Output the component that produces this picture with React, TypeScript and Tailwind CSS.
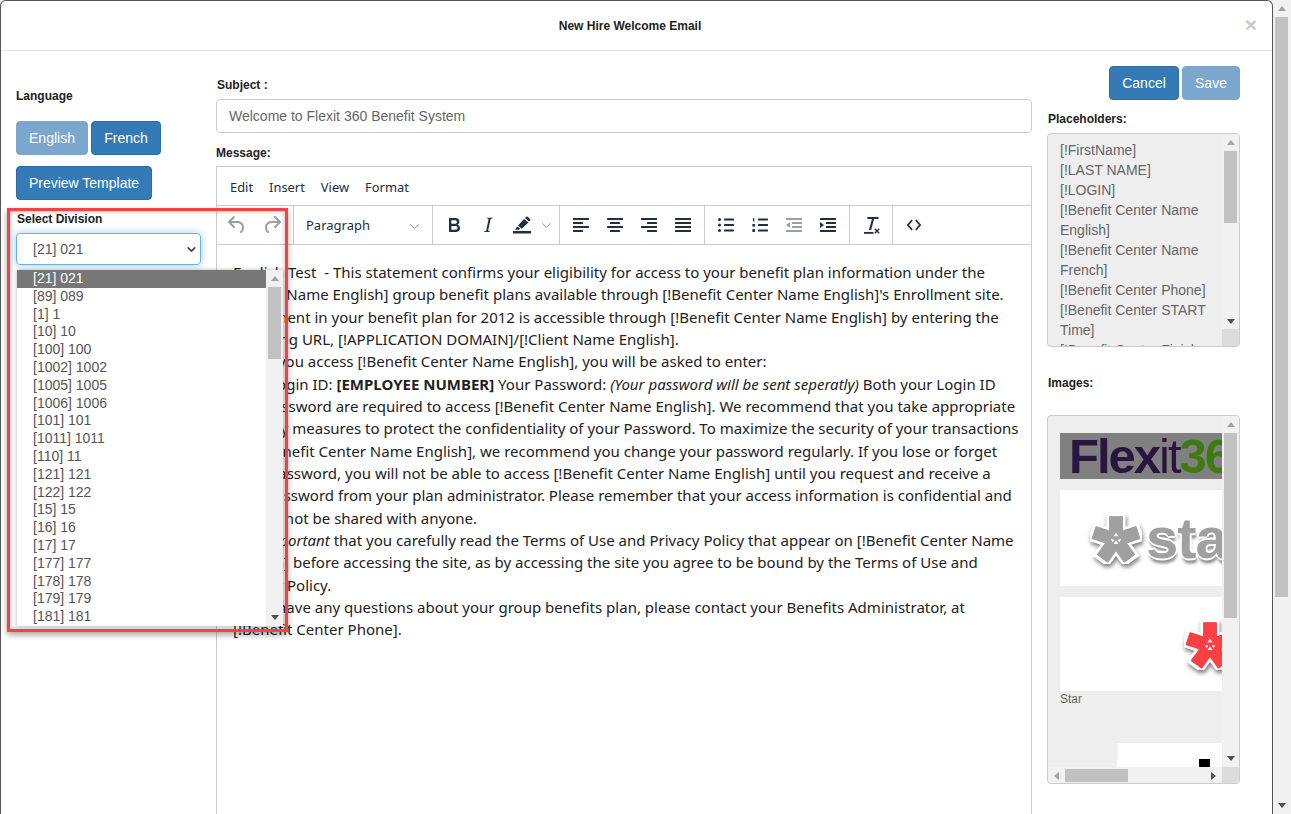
import { ChevronDown } from "lucide-react";

const divisions = [
  "[21] 021", "[89] 089", "[1] 1", "[10] 10", "[100] 100", "[1002] 1002", "[1005] 1005", "[1006] 1006",
  "[101] 101", "[1011] 1011", "[110] 11", "[121] 121", "[122] 122", "[15] 15", "[16] 16", "[17] 17",
  "[177] 177", "[178] 178", "[179] 179", "[181] 181",
];

const placeholders = [
  "[!FirstName]", "[!LAST NAME]", "[!LOGIN]", "[!Benefit Center Name English]", "[!Benefit Center Name French]",
  "[!Benefit Center Phone]", "[!Benefit Center START Time]", "[!Benefit Center Finish",
];

const font = "font-['Liberation_Sans',Arial,sans-serif]";

function Btn({ children, light, className = "" }: { children: React.ReactNode; light?: boolean; className?: string }) {
  return (
    <button className={`h-[34px] rounded-[4px] border text-[14px] text-white ${light ? "bg-[#7ba6ce] border-[#7ba6ce]" : "bg-[#337ab7] border-[#2e6da4]"} ${className}`}>
      {children}
    </button>
  );
}

function Arrows() {
  return <span className="w-0 h-0 border-x-[4px] border-x-transparent border-t-[5px] border-t-[#505050]" />;
}

function Scrollbar({ height, thumbTop, thumbHeight }: { height: number; thumbTop: number; thumbHeight: number }) {
  return (
    <div className="w-[17px] shrink-0 bg-[#f1f1f1] flex flex-col items-center justify-between py-[6px] relative" style={{ height }}>
      <span className="w-0 h-0 border-x-[4px] border-x-transparent border-b-[5px] border-b-[#a3a3a3]" />
      <div className="absolute left-[2px] w-[13px] bg-[#c1c1c1]" style={{ top: thumbTop, height: thumbHeight }} />
      <Arrows />
    </div>
  );
}

function Tool({ children, muted }: { children: React.ReactNode; muted?: boolean }) {
  return (
    <span className={`w-[34px] flex justify-center items-center ${muted ? "text-[#9a9ea5]" : "text-[#222f3e]"}`}>
      <svg width="24" height="24" viewBox="0 0 24 24" fill="currentColor">{children}</svg>
    </span>
  );
}

// bars used by the align and list icons: [x, y, width]
function Bars({ rows }: { rows: number[][] }) {
  return (
    <>
      {rows.map(([x, y, w]) => (
        <rect key={`${x}-${y}`} x={x} y={y} width={w} height="2" rx="0.6" />
      ))}
    </>
  );
}

function Star({ color, size }: { color: string; size: number }) {
  return (
    <svg width={size} height={size} viewBox="0 0 60 60" className="shrink-0 drop-shadow-[1px_3px_2px_rgba(0,0,0,0.5)]">
      {[0, 72, 144, 216, 288].map((a) => (
        <rect key={a} x="21" y="3" width="18" height="26" transform={`rotate(${a} 30 32)`} fill={color} stroke="#fff" strokeWidth="4" />
      ))}
      {[0, 72, 144, 216, 288].map((a) => (
        <rect key={a} x="22" y="5" width="16" height="28" transform={`rotate(${a} 30 32)`} fill={color} />
      ))}
      <path d="M30 24l3 4h-6zM24 31l4 1-2 3zM36 31l-4 1 2 3zM30 33l3 4h-6z" fill="#fff" />
    </svg>
  );
}

export default function App() {
  return (
    <div className={`${font} h-[814px] w-[1291px] overflow-hidden flex bg-[#f1f1f1] text-[#333]`}>
      <div className="w-[1273px] shrink-0 h-[814px] bg-white border border-[#555] border-b-0 rounded-t-[6px] relative overflow-hidden">
        <div className="h-[50px] border-b border-[#e5e5e5] flex items-center justify-center pr-[13px] text-[12px] font-bold text-[#222] relative">
          New Hire Welcome Email
          <span className="absolute right-[15px] top-[13px] text-[21px] font-bold leading-[21px] text-[#c9c9c9]">×</span>
        </div>

        <div className="flex">
          <div className="w-[215px] shrink-0 pl-[15px] pt-[38px]">
            <div className="text-[12px] font-bold leading-[14px] text-[#222]">Language</div>
            <div className="flex gap-[3px] mt-[18px]">
              <Btn light className="w-[72px]">English</Btn>
              <Btn className="w-[70px]">French</Btn>
            </div>
            <Btn className="w-[136px] mt-[11px]">Preview Template</Btn>
            <div className="text-[12px] font-bold leading-[14px] text-[#222] mt-[12px] ml-[1px]">Select Division</div>
            <div className="mt-[7px] w-[185px] h-[32px] rounded-[4px] border border-[#66afe9] shadow-[0_0_8px_rgba(102,175,233,0.6)] flex items-center justify-between pl-[16px] pr-[2px] text-[14px] text-[#555]">
              [21] 021
              <ChevronDown size={13} strokeWidth={3} className="text-[#444]" />
            </div>
          </div>

          <div className="w-[816px] shrink-0">
            <div className="text-[12px] font-bold leading-[14px] text-[#222] mt-[27px] ml-[1px]">Subject :</div>
            <div className="mt-[7px] h-[34px] rounded-[4px] border border-[#ccc] flex items-center px-[12px] text-[14px] text-[#666]">Welcome to Flexit 360 Benefit System</div>
            <div className="text-[12px] font-bold leading-[14px] text-[#222] mt-[13px]">Message:</div>
            <div className="mt-[6px] border border-[#ccc] h-[650px]">
              <div className="h-[39px] border-b border-[#ccc] flex items-center gap-[16px] pl-[13px] pt-[3px] text-[12.9px] text-[#222f3e] font-['Noto_Sans',sans-serif]">
                <span>Edit</span><span>Insert</span><span>View</span><span>Format</span>
              </div>
              <div className="h-[39px] border-b border-[#ccc] flex items-center">
                <div className="w-[77px] h-full border-r border-[#ccc] flex items-center pl-[3px]">
                  <Tool muted><path d="M6.4 8H12c3.7 0 6.2 2 6.8 5.1.6 2.7-.4 5.6-2.3 6.8a1 1 0 0 1-1-1.8c1.1-.6 1.8-2.7 1.4-4.6-.5-2.1-2.1-3.5-4.9-3.5H6.4l3.3 3.3a1 1 0 1 1-1.4 1.4l-5-5a1 1 0 0 1 0-1.4l5-5a1 1 0 0 1 1.4 1.4L6.4 8z" /></Tool>
                  <span className="w-[1px]" />
                  <Tool muted><path d="M17.6 10H12c-2.8 0-4.4 1.4-4.9 3.5-.4 2 .3 4 1.4 4.6a1 1 0 1 1-1 1.8c-2-1.2-2.9-4.1-2.3-6.8.6-3 3-5.1 6.8-5.1h5.6l-3.3-3.3a1 1 0 1 1 1.4-1.4l5 5a1 1 0 0 1 0 1.4l-5 5a1 1 0 0 1-1.4-1.4l3.3-3.3z" /></Tool>
                </div>
                <div className="w-[139px] h-full border-r border-[#ccc] flex items-center justify-between pl-[12px] pr-[10px] pt-[2px] text-[13px] text-[#222f3e] font-['Noto_Sans',sans-serif]">
                  Paragraph
                  <ChevronDown size={15} strokeWidth={1.6} className="text-[#8a8f97]" />
                </div>
                <div className="w-[127px] h-full border-r border-[#ccc] flex items-center pl-[4px]">
                  <Tool><path d="M7.8 19c-.3 0-.5 0-.6-.2l-.2-.5V5.7c0-.2 0-.4.2-.5l.6-.2h5c1.5 0 2.7.3 3.5 1 .7.6 1.1 1.4 1.1 2.5a3 3 0 0 1-.6 1.9c-.4.6-1 1-1.6 1.2.4.1.9.3 1.3.6s.8.7 1 1.2c.4.4.5 1 .5 1.6 0 1.3-.4 2.3-1.3 3-.8.7-2.1 1-3.8 1H7.8zm5-8.3c.6 0 1.2-.1 1.6-.5.4-.3.6-.7.6-1.3 0-1.1-.8-1.7-2.3-1.7H9.3v3.5h3.4zm.5 6c.7 0 1.3-.1 1.7-.4.4-.4.6-.9.6-1.5s-.2-1-.7-1.4c-.4-.3-1-.4-2-.4H9.4v3.8h4z" /></Tool>
                  <Tool><path d="M16.7 4.7l-.1.9h-.3c-.6 0-1 0-1.4.3-.3.3-.4.6-.5 1.1l-2.1 9.8v.6c0 .5.4.8 1.4.8h.2l-.2.8H8l.2-.8h.2c1.1 0 1.8-.5 2-1.5l2-9.8.1-.5c0-.6-.4-.8-1.4-.8h-.3l.2-.9h5.8z" /></Tool>
                  <Tool><path d="M3 18h18v2.5H3zM5 16.8l2.2-3.2 3.2 2.2-1.4 1H5zM8 12.6l6-6.6 4.4 3.6-6.6 6.2zM15 5l1.3-1.2a1 1 0 0 1 1.4 0l2.4 2.2a1 1 0 0 1 0 1.4L19 8.6z" /></Tool>
                  <ChevronDown size={15} strokeWidth={1.6} className="text-[#8a8f97]" />
                </div>
                <div className="w-[145px] h-full border-r border-[#ccc] flex items-center pl-[4px]">
                  <Tool><Bars rows={[[4, 5, 16], [4, 9, 10], [4, 13, 16], [4, 17, 10]]} /></Tool>
                  <Tool><Bars rows={[[4, 5, 16], [7, 9, 10], [4, 13, 16], [7, 17, 10]]} /></Tool>
                  <Tool><Bars rows={[[4, 5, 16], [10, 9, 10], [4, 13, 16], [10, 17, 10]]} /></Tool>
                  <Tool><Bars rows={[[4, 5, 16], [4, 9, 16], [4, 13, 16], [4, 17, 16]]} /></Tool>
                </div>
                <div className="w-[145px] h-full border-r border-[#ccc] flex items-center pl-[4px]">
                  <Tool>
                    <circle cx="5.5" cy="6.5" r="1.5" /><circle cx="5.5" cy="12" r="1.5" /><circle cx="5.5" cy="17.5" r="1.5" />
                    <Bars rows={[[10, 5.5, 10], [10, 11, 10], [10, 16.5, 10]]} />
                  </Tool>
                  <Tool>
                    <rect x="5" y="5" width="1.2" height="3.5" /><rect x="4.4" y="11" width="2.6" height="2.6" /><rect x="4.4" y="16" width="2.6" height="3" />
                    <Bars rows={[[10, 5.5, 10], [10, 11, 10], [10, 16.5, 10]]} />
                  </Tool>
                  <Tool muted>
                    <path d="M8 9v6l-4-3z" />
                    <Bars rows={[[4, 5, 16], [10, 9, 10], [10, 13, 10], [4, 17, 16]]} />
                  </Tool>
                  <Tool>
                    <path d="M4 9v6l4-3z" />
                    <Bars rows={[[4, 5, 16], [10, 9, 10], [10, 13, 10], [4, 17, 16]]} />
                  </Tool>
                </div>
                <div className="w-[43px] h-full border-r border-[#ccc] flex items-center justify-center">
                  <Tool>
                    <path d="M8.5 4h11v2h-4.4l-3 11h-2.2l3-11H8.1z" />
                    <rect x="5" y="19" width="9.5" height="1.8" />
                    <path d="M16.3 15.3l1.7 1.7 1.7-1.7 1 1-1.7 1.7 1.7 1.7-1 1-1.7-1.7-1.7 1.7-1-1 1.7-1.7-1.7-1.7z" />
                  </Tool>
                </div>
                <div className="w-[42px] flex justify-center">
                  <Tool><path d="M9.6 6.6L4.7 12l4.9 5.4 1.2-1.2L7 12l3.8-4.2zM14.4 6.6L13.2 7.8 17 12l-3.8 4.2 1.2 1.2 4.9-5.4z" /></Tool>
                </div>
              </div>
              <div className="pl-[16px] pr-[9px] pt-[16px] text-[15.02px] leading-[22.33px] text-[#222] font-['Noto_Sans',sans-serif]">
                <p>English Test&nbsp; - This statement confirms your eligibility for access to your benefit plan information under the [!Client Name English] group benefit plans available through [!Benefit Center Name English]'s Enrollment site. Enrollment in your benefit plan for 2012 is accessible through [!Benefit Center Name English] by entering the following URL, [!APPLICATION DOMAIN]/[!Client Name English].</p>
                <p>When you access [!Benefit Center Name English], you will be asked to enter:</p>
                <p>Your Login ID: <b>[EMPLOYEE NUMBER]</b> Your Password: <i>(Your password will be sent seperatly)</i> Both your Login ID and Password are required to access [!Benefit Center Name English]. We recommend that you take appropriate security measures to protect the confidentiality of your Password. To maximize the security of your transactions on [!Benefit Center Name English], we recommend you change your password regularly. If you lose or forget your Password, you will not be able to access [!Benefit Center Name English] until you request and receive a new Password from your plan administrator. Please remember that your access information is confidential and should not be shared with anyone.</p>
                <p>It is <i>important</i> that you carefully read the Terms of Use and Privacy Policy that appear on [!Benefit Center Name English] before accessing the site, as by accessing the site you agree to be bound by the Terms of Use and Privacy Policy.</p>
                <p>If you have any questions about your group benefits plan, please contact your Benefits Administrator, at [!Benefit Center Phone].</p>
              </div>
            </div>
          </div>

          <div className="w-[193px] ml-[15px] shrink-0">
            <div className="flex justify-end gap-[3px] mt-[15px]">
              <Btn className="w-[70px]">Cancel</Btn>
              <Btn light className="w-[58px]">Save</Btn>
            </div>
            <div className="text-[12px] font-bold leading-[14px] text-[#222] mt-[12px] ml-[1px]">Placeholders:</div>
            <div className="mt-[7px] h-[214px] border border-[#ccc] rounded-[4px] bg-[#eee] flex overflow-hidden text-[14px] leading-[20px] text-[#666] relative">
              <div className="flex-1 pl-[12px] pr-[8px] pt-[6px] overflow-hidden">
                {placeholders.map((p) => <div key={p}>{p}</div>)}
              </div>
              <Scrollbar height={196} thumbTop={17} thumbHeight={72} />
              <div className="absolute right-0 bottom-0 w-[17px] h-[17px] bg-[#dcdcdc]" />
            </div>
            <div className="text-[12px] font-bold leading-[14px] text-[#222] mt-[29px] ml-[1px]">Images:</div>
            <div className="mt-[25px] h-[369px] border border-[#ccc] rounded-[4px] bg-[#eee] overflow-hidden text-[12px] text-[#666]">
              <div className="flex h-[351px]">
                <div className="flex-1 overflow-hidden pl-[12px] pt-[17px] relative">
                  <div className="h-[46px] bg-[#808080] overflow-hidden whitespace-nowrap pl-[9px] text-[49px] leading-[46px] text-[#2a1540] tracking-[-2px]">
                    <b>Flex</b><span className="font-light">it</span><b className="text-[#3d7a10]">360</b>
                  </div>
                  <div className="h-[96px] mt-[11px] bg-white overflow-hidden whitespace-nowrap flex items-center pl-[30px]">
                    <Star color="#a0a0a0" size={52} />
                    <span className="text-[58px] leading-[58px] font-bold text-[#a0a0a0] ml-[4px] tracking-[-1px] [text-shadow:2px_0_#fff,-2px_0_#fff,0_2px_#fff,0_-2px_#fff,1px_5px_3px_rgba(0,0,0,0.45)]">star</span>
                  </div>
                  <div className="h-[94px] mt-[11px] bg-white overflow-hidden flex items-center pl-[124px]">
                    <Star color="#f94144" size={52} />
                  </div>
                  <div className="mt-[1px] leading-[14px]">Star</div>
                  <div className="absolute left-[69px] right-0 top-[327px] h-[30px] bg-white">
                    <span className="absolute right-[12px] top-[16px] w-[11px] h-[9px] bg-black" />
                  </div>
                </div>
                <Scrollbar height={351} thumbTop={17} thumbHeight={185} />
              </div>
              <div className="h-[17px] bg-[#f1f1f1] flex items-center relative">
                <span className="ml-[6px] w-0 h-0 border-y-[4px] border-y-transparent border-r-[5px] border-r-[#a3a3a3]" />
                <div className="absolute left-[17px] top-[2px] w-[63px] h-[13px] bg-[#c1c1c1]" />
                <span className="absolute right-[23px] w-0 h-0 border-y-[4px] border-y-transparent border-l-[5px] border-l-[#505050]" />
                <span className="absolute right-0 w-[17px] h-[17px] bg-[#dcdcdc]" />
              </div>
            </div>
          </div>
        </div>

        {/* callout pasted over the page */}
        <div className="absolute left-[6px] top-[207px] w-[281px] h-[424px] border-[3px] border-[#f94144] shadow-[0_3px_6px_rgba(0,0,0,0.35),inset_0_0_5px_rgba(0,0,0,0.3)] pointer-events-none">
          <div className="absolute left-[7px] top-[59px] w-[266px] h-[356px] bg-white flex shadow-[0_0_4px_rgba(0,0,0,0.3)] overflow-hidden">
            <div className="flex-1 text-[14px] leading-[17.8px] text-[#555]">
              {divisions.map((d, i) => (
                <div key={d} className={`pl-[16px] ${i === 0 ? "bg-[#777] text-white" : ""}`}>{d}</div>
              ))}
            </div>
            <Scrollbar height={356} thumbTop={17} thumbHeight={72} />
          </div>
        </div>
      </div>

      <div className="w-[18px] h-[814px] bg-[#f1f1f1] relative flex flex-col items-center justify-between py-[6px]">
        <span className="w-0 h-0 border-x-[4px] border-x-transparent border-b-[5px] border-b-[#a3a3a3]" />
        <div className="absolute left-[2px] top-[17px] w-[13px] h-[580px] bg-[#c1c1c1]" />
        <Arrows />
      </div>
    </div>
  );
}
